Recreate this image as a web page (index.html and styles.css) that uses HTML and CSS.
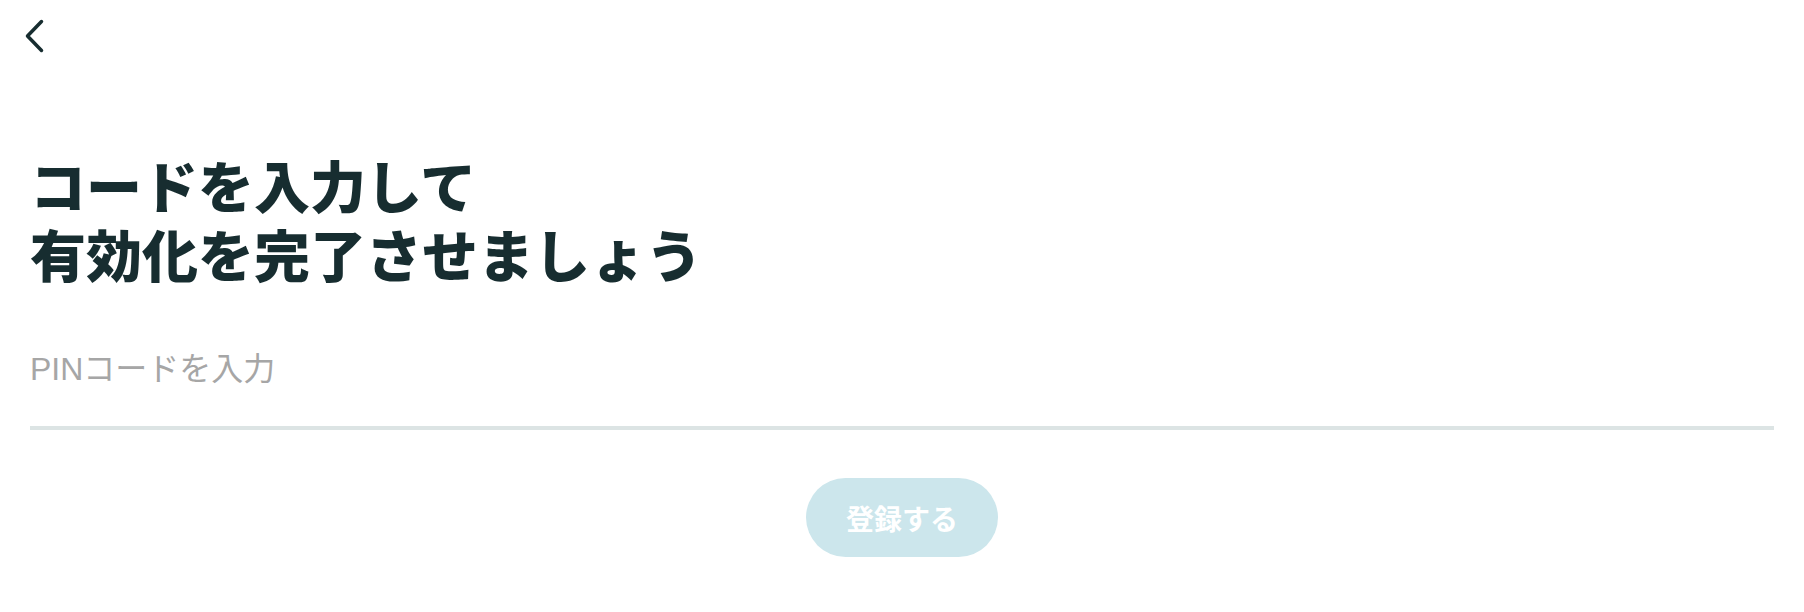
FILE: index.html
```html
<!DOCTYPE html>
<html lang="ja">
<head>
<meta charset="utf-8">
<title>コードを入力</title>
<link rel="stylesheet" href="styles.css">
</head>
<body>
<header class="topbar">
  <button class="back" aria-label="戻る">
    <svg width="24" height="36" viewBox="0 0 24 36" aria-hidden="true">
      <path d="M19.5 3.5 L5.5 18 L19.5 32.5" fill="none" stroke="#172d30" stroke-width="3.5" stroke-linecap="round" stroke-linejoin="round"/>
    </svg>
  </button>
</header>
<main class="content">
  <h1 class="title">コードを入力して<br>有効化を完了させましょう</h1>
  <input class="pin" type="text" placeholder="PINコードを入力">
  <div class="actions">
    <button class="submit" disabled>登録する</button>
  </div>
</main>
</body>
</html>
```

FILE: styles.css
```css
html, body {
  margin: 0;
  padding: 0;
  background: #ffffff;
}
body {
  font-family: "Liberation Sans", "Noto Sans CJK JP", sans-serif;
  color: #172d30;
}
.topbar {
  height: 56px;
  padding: 0 0 0 22px;
  display: flex;
  align-items: flex-start;
}
.back {
  margin-top: 18px;
  padding: 0;
  border: none;
  background: none;
  width: 24px;
  height: 36px;
  display: flex;
}
.content {
  padding: 0 30px;
  display: flex;
  flex-direction: column;
}
.title {
  margin: 93px 0 0 0;
  font-family: "Noto Sans CJK JP", sans-serif;
  font-weight: 900;
  font-size: 56px;
  line-height: 69px;
  color: #172d30;
}
.pin {
  margin-top: 26px;
  height: 113px;
  padding: 0;
  border: none;
  border-bottom: 4px solid #dce4e4;
  box-sizing: content-box;
  font-family: "Liberation Sans", "Noto Sans CJK JP", sans-serif;
  font-size: 32px;
  color: #172d30;
  outline: none;
  background: transparent;
}
.pin::placeholder {
  color: #a6a6a6;
}
.actions {
  display: flex;
  justify-content: center;
  margin-top: 48px;
}
.submit {
  width: 192px;
  height: 79px;
  border: none;
  border-radius: 40px;
  background: #cce6ec;
  color: #ffffff;
  font-family: "Noto Sans CJK JP", sans-serif;
  font-weight: 700;
  font-size: 28px;
  padding: 0;
}
```
